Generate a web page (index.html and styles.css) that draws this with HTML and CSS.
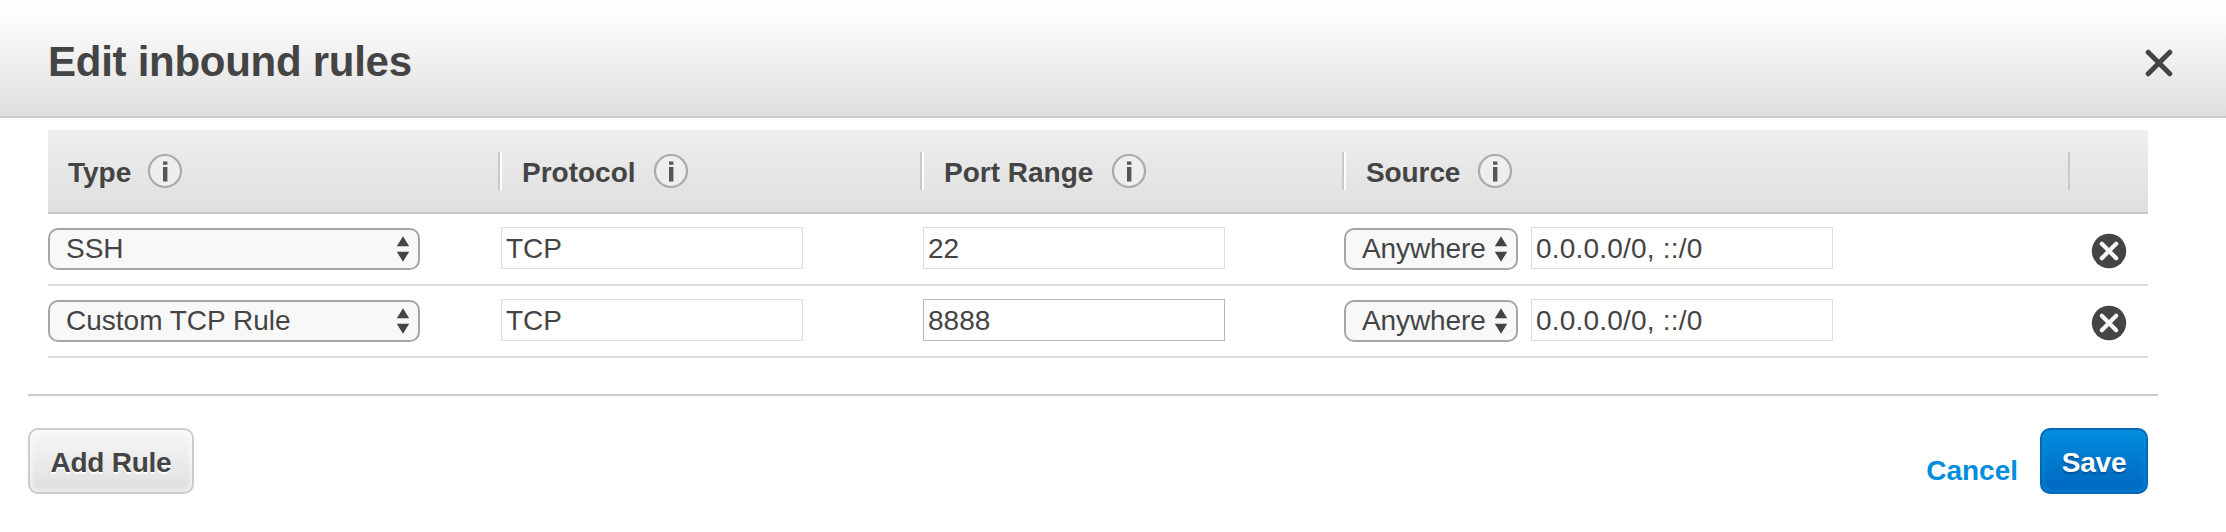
FILE: index.html
```html
<!DOCTYPE html>
<html lang="en">
<head>
<meta charset="utf-8">
<title>Edit inbound rules</title>
<link rel="stylesheet" href="styles.css">
</head>
<body>
<svg class="symbols" aria-hidden="true">
  <symbol id="info" viewBox="0 0 36 36">
    <circle cx="18" cy="18" r="16" fill="#eee" stroke="#aaa" stroke-width="2.2"/>
    <path d="M16 8.4h4.4v3.4H16zM16 14h4.4v14.6H16z" fill="#555"/>
  </symbol>
  <symbol id="arrows" viewBox="0 0 14 26">
    <path d="M7 0.3 13.2 10.3H.8zM7 25.7 13.2 15.7H.8z" fill="#444"/>
  </symbol>
  <symbol id="remove" viewBox="0 0 36 36">
    <circle cx="18" cy="18" r="17.2" fill="#444"/>
    <path d="M10.8 10.8 25.2 25.2M25.2 10.8 10.8 25.2" stroke="#f5f5f5" stroke-width="4.2" stroke-linecap="round"/>
  </symbol>
  <symbol id="close" viewBox="0 0 28 28">
    <path d="M3.2 3.2 24.8 24.8M24.8 3.2 3.2 24.8" stroke="#444" stroke-width="5" stroke-linecap="round"/>
  </symbol>
</svg>
<header class="dialog-header">
  <h1 class="title">Edit inbound rules</h1>
  <svg class="close"><use href="#close"/></svg>
</header>
<main class="dialog-body">
  <section class="rules">
    <div class="row head">
      <div class="th"><span class="type">Type</span><svg class="info"><use href="#info"/></svg></div>
      <div class="th divided"><span class="protocol">Protocol</span><svg class="info"><use href="#info"/></svg></div>
      <div class="th divided"><span class="port">Port Range</span><svg class="info"><use href="#info"/></svg></div>
      <div class="th divided"><span class="source">Source</span><svg class="info"><use href="#info"/></svg></div>
      <div class="th divided last"></div>
    </div>
    <div class="row rule">
      <div class="td"><div class="select wide"><span>SSH</span><svg class="arrows"><use href="#arrows"/></svg></div></div>
      <div class="td"><div class="field">TCP</div></div>
      <div class="td"><div class="field">22</div></div>
      <div class="td"><div class="select any"><span>Anywhere</span><svg class="arrows"><use href="#arrows"/></svg></div><div class="field cidr">0.0.0.0/0, ::/0</div></div>
      <div class="td"><svg class="remove"><use href="#remove"/></svg></div>
    </div>
    <div class="row rule">
      <div class="td"><div class="select wide"><span>Custom TCP Rule</span><svg class="arrows"><use href="#arrows"/></svg></div></div>
      <div class="td"><div class="field">TCP</div></div>
      <div class="td"><div class="field enabled">8888</div></div>
      <div class="td"><div class="select any"><span>Anywhere</span><svg class="arrows"><use href="#arrows"/></svg></div><div class="field cidr">0.0.0.0/0, ::/0</div></div>
      <div class="td"><svg class="remove"><use href="#remove"/></svg></div>
    </div>
  </section>
  <footer class="actions">
    <button class="button add">Add Rule</button>
    <a class="cancel">Cancel</a>
    <button class="button save">Save</button>
  </footer>
</main>
</body>
</html>
```
FILE: styles.css
```css
* { box-sizing: border-box; }
body {
  margin: 0;
  background: #fff;
  color: #444;
  font: 28px/32px "Liberation Sans", Arial, sans-serif;
}
svg { display: block; flex: none; }
.symbols { display: none; }

.dialog-header {
  height: 118px;
  display: flex;
  align-items: center;
  justify-content: space-between;
  padding: 8px 53px 0 48px;
  border-bottom: 2px solid #ccc;
  background: linear-gradient(#fff, #fdfdfd 12%, #dfdfdf);
}
.title {
  margin: 0;
  font-size: 42px;
  line-height: 48px;
  letter-spacing: -0.27px;
}
.close { width: 28px; height: 28px; margin-top: 2px; }

.dialog-body { padding: 12px 68px 0 28px; }
.rules { margin: 0 10px 36px 20px; }
.row {
  display: grid;
  grid-template-columns: 450px 422px 422px 726px 80px;
}
.head {
  height: 84px;
  padding-top: 22px;
  border-bottom: 2px solid #c8c8c8;
  background: linear-gradient(#eee, #dfdfdf);
  font-weight: bold;
}
.th {
  height: 38px;
  display: flex;
  align-items: center;
  padding-left: 20px;
}
.divided {
  border-left: 2px solid #c8c8c8;
  box-shadow: inset 2px 0 #fff;
  padding-left: 22px;
}
.last { box-shadow: none; }
.th span { flex: none; white-space: nowrap; padding-top: 3px; }
.type { width: 79px; }
.protocol { width: 131px; }
.port { width: 167px; }
.source { width: 111px; letter-spacing: -0.1px; }
.info { width: 36px; height: 36px; }

.rule { height: 72px; border-bottom: 2px solid #ddd; }
.td { display: flex; align-items: flex-start; padding-top: 13px; padding-left: 3px; }
.td:first-child { padding-left: 0; }
.td:nth-child(4) { padding-left: 2px; }
.field {
  width: 302px;
  height: 42px;
  border: 1px solid #ddd;
  padding: 5px 4px 0;
  white-space: nowrap;
}
.cidr { letter-spacing: 0.2px; }
.enabled { border-color: #b5b5b5; }
.select {
  height: 42px;
  margin-top: 1px;
  display: flex;
  align-items: center;
  justify-content: space-between;
  border: 2px solid #a6a6a6;
  border-radius: 10px;
  background: #f8f8f8;
  padding: 0 8px 0 16px;
  white-space: nowrap;
}
.wide { width: 372px; }
.any { width: 174px; margin-right: 13px; letter-spacing: -0.1px; }
.arrows { width: 14px; height: 26px; }
.remove { width: 36px; height: 36px; margin: 6px 0 0 20px; }

.actions {
  display: flex;
  align-items: flex-start;
  border-top: 2px solid #ccc;
  padding: 32px 10px 0 0;
}
.button {
  height: 66px;
  margin: 0;
  padding: 4px 0 0;
  border: 2px solid #ccc;
  border-radius: 10px;
  font: bold 28px/32px "Liberation Sans", Arial, sans-serif;
  white-space: nowrap;
}
.add {
  width: 166px;
  margin-right: auto;
  color: #444;
  letter-spacing: -0.25px;
  background: linear-gradient(#f7f7f7, #dfdfdf);
  box-shadow: inset 0 0 6px #fff;
  text-shadow: 0 2px #fff;
}
.cancel {
  margin: 27px 22px 0 0;
  color: #008dde;
  font-weight: bold;
}
.save {
  width: 108px;
  color: #fff;
  letter-spacing: -0.2px;
  border-color: #0067b9;
  background: linear-gradient(#008dde, #0067bf);
  box-shadow: inset 0 0 6px #0092d6;
  text-shadow: 0 2px 2px #00509a;
}
```
